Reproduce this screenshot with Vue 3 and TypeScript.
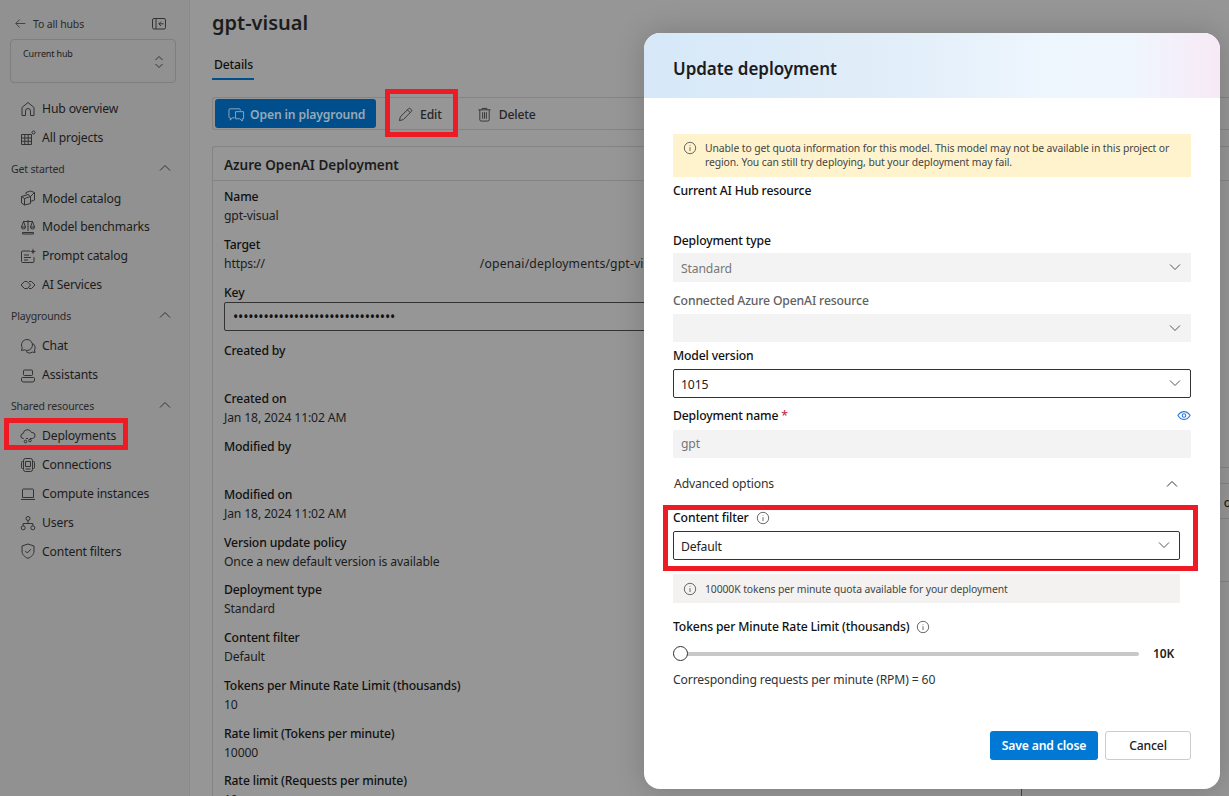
<script setup lang="ts">
const detailRows = [
  ['Name', 'gpt-visual'],
  ['Target', 'https://'],
]
const lowerRows = [
  ['Created by', '', false],
  ['Created on', 'Jan 18, 2024 11:02 AM', false],
  ['Modified by', '', false],
  ['Modified on', 'Jan 18, 2024 11:02 AM', false],
  ['Version update policy', 'Once a new default version is available', true],
  ['Deployment type', 'Standard', false],
  ['Content filter', 'Default', false],
  ['Tokens per Minute Rate Limit (thousands)', '10', false],
  ['Rate limit (Tokens per minute)', '10000', true],
  ['Rate limit (Requests per minute)', '10', false],
]
</script>

<template>
  <div class="page">
    <aside class="side">
      <div class="back">
        <svg class="ico" viewBox="0 0 16 16"><path d="M14 8H2.5M7 3 2.2 8 7 13" /></svg>
        <span>To all hubs</span>
        <svg class="collapse" viewBox="0 0 16 16"><rect x="1.5" y="2.5" width="13" height="10.5" rx="1.5" /><path d="M5 3v10M12.5 7.8H8M10 5.6 7.8 7.8 10 10" /></svg>
      </div>
      <div class="hub">
        <span>Current hub</span>
        <svg viewBox="0 0 12 18"><path d="M2.5 7 6 3.5 9.5 7M2.5 11 6 14.5 9.5 11" /></svg>
      </div>

      <nav class="nav nav-top">
        <a><svg class="ico" viewBox="0 0 16 16"><path d="M2 14.5V6.5L8 1.5l6 5v8h-3.5V10a2.5 2.5 0 0 0-5 0v4.500z" /></svg>Hub overview</a>
        <a><svg class="ico" viewBox="0 0 16 16"><path d="M1.500 4.500h10v10h-10zM1.500 8h10M1.500 11.300h10M4.800 4.500v10M8.200 4.500v10" /><circle cx="13.500" cy="2.500" r="1.500" /></svg>All projects</a>
      </nav>

      <div class="group">Get started<svg viewBox="0 0 12 8"><path d="M1 6.500 6 1.500l5 5" /></svg></div>
      <nav class="nav">
        <a class="tight"><svg class="ico" viewBox="0 0 16 16"><path d="M1.500 6.500 8 4.500l2.500 2v7l-6 1.500-3-2zM1.500 6.500l3 2v6.500M4.500 8.500l6-2M6 4V2.500L10.500 1l4 1.500v7.500l-4 1.500M10.500 6.500l4-4" /></svg>Model catalog</a>
        <a><svg class="ico" viewBox="0 0 16 16"><path d="M8 1v11M3 2.500h10M3.500 2.500 1.500 8h4zM12.500 2.500 10.500 8h4zM1.500 8a2 2 0 0 0 4 0M10.500 8a2 2 0 0 0 4 0M2.500 13.500h11v1.500h-11z" /></svg>Model benchmarks</a>
        <a><svg class="ico" viewBox="0 0 16 16"><path d="M10 3H2.500A1 1 0 0 0 1.500 4v9.500a1 1 0 0 0 1 1H13a1 1 0 0 0 1-1V9M4 7h5M4 9.500h7M4 12h4" /><path class="fill" d="M13 .5l.8 2.200 2.200.8-2.200.8L13 6.500l-.8-2.200-2.200-.8 2.200-.8z" /></svg>Prompt catalog</a>
        <a><svg class="ico" viewBox="0 0 16 16"><path d="M1 8 4.500 4.500h2.500L10.500 8 7.500 11.500H4.500zM15 8l-3.500-3.500H9M15 8l-3.500 3.500H9" /></svg>AI Services</a>
      </nav>

      <div class="group">Playgrounds<svg viewBox="0 0 12 8"><path d="M1 6.500 6 1.500l5 5" /></svg></div>
      <nav class="nav">
        <a><svg class="ico" viewBox="0 0 16 16"><path d="M7 1.500a5.500 5.500 0 0 0-4.800 8.200L1.500 12.500l3-.6A5.500 5.500 0 1 0 7 1.500zM12.500 5.500a4.500 4.500 0 0 1 2 6.500l.5 2.500-2.500-.4A5 5 0 0 1 6 13.500" /></svg>Chat</a>
        <a><svg class="ico" viewBox="0 0 16 16"><path d="M4.500 3h7A1 1 0 0 1 12.500 4v3.500a1 1 0 0 1-1 1h-7a1 1 0 0 1-1-1V4a1 1 0 0 1 1-1zM2.500 10.500h11a1 1 0 0 1 1 1V13a2 2 0 0 1-2 2h-9a2 2 0 0 1-2-2v-1.500a1 1 0 0 1 1-1zM6 5.500h.01M10 5.500h.01" /></svg>Assistants</a>
      </nav>

      <div class="group">Shared resources<svg viewBox="0 0 12 8"><path d="M1 6.500 6 1.500l5 5" /></svg></div>
      <nav class="nav">
        <a><svg class="ico" viewBox="0 0 16 16"><path d="M4 10.500H3.500a2.500 2.500 0 0 1-.3-5A4.300 4.300 0 0 1 11.500 4.500a3 3 0 0 1 1 6H10M6 10.500h2" /><circle cx="5.500" cy="13.500" r="1.300" /><circle cx="10" cy="12.500" r="1.300" /></svg>Deployments</a>
        <a><svg class="ico" viewBox="0 0 16 16"><rect x="3.500" y="1.500" width="9" height="13" rx="2" /><path d="M3.500 4.500H2.500A1 1 0 0 0 1.500 5.500v5a1 1 0 0 0 1 1h1M12.500 4.500h1a1 1 0 0 1 1 1v5a1 1 0 0 1-1 1h-1M5.500 4.500h5v5h-5zM5.500 12h5" /></svg>Connections</a>
        <a><svg class="ico" viewBox="0 0 16 16"><path d="M3.500 3h9a1 1 0 0 1 1 1v7.500h-11V4a1 1 0 0 1 1-1zM1 13.500h14" /></svg>Compute instances</a>
        <a><svg class="ico" viewBox="0 0 16 16"><circle cx="8" cy="3.500" r="2" /><circle cx="3.200" cy="12.800" r="2" /><circle cx="12.800" cy="12.800" r="2" /><path d="M8 5.500v3M3.200 10.800V8.500h9.600v2.300" /></svg>Users</a>
        <a class="tight"><svg class="ico" viewBox="0 0 16 16"><path d="M8 1 14 3v5c0 3.500-2.500 6-6 7.300C4.500 14 2 11.500 2 8V3zM5.300 8l2 2 3.500-3.700" /></svg>Content filters</a>
      </nav>
    </aside>

    <main class="main">
      <h1>gpt-visual</h1>
      <div class="tabs"><span class="tab">Details</span></div>
      <div class="toolbar">
        <button class="play">
          <svg viewBox="0 0 18 18"><path d="M2 3h10a1 1 0 0 1 1 1v1M7 12.500H4.500L2.500 15v-2.500H2a1 1 0 0 1-1-1V4a1 1 0 0 1 1-1M8 6h8.500v7.500h-1.500V16l-2.500-2.500H8z" /></svg>
          Open in playground
        </button>
        <button class="tool edit">
          <svg viewBox="0 0 16 16"><path d="M1.500 14.500l1-4L11 2a1.700 1.700 0 0 1 2.500 0l.5.500a1.700 1.700 0 0 1 0 2.500L5.500 13.500zM10 3l3 3" /></svg>
          Edit
        </button>
        <button class="tool del">
          <svg viewBox="0 0 16 16"><path d="M5.500 3V1.500h5V3M1.500 3h13M3 3v10.500A1.500 1.500 0 0 0 4.500 15h7a1.500 1.500 0 0 0 1.500-1.500V3M6 5.500v7M8 5.500v7M10 5.500v7" /></svg>
          Delete
        </button>
      </div>

      <section class="card">
        <h2>Azure OpenAI Deployment</h2>
        <div class="card-body">
          <div class="details">
            <div v-for="row in detailRows" :key="row[0]" class="pair">
              <div class="k">{{ row[0] }}</div>
              <div class="v target">
                {{ row[1] }}
                <span v-if="row[0] === 'Target'" class="path">/openai/deployments/gpt-visual</span>
              </div>
            </div>
            <div class="k">Key</div>
            <div class="key">••••••••••••••••••••••••••••••••</div>
            <div v-for="row in lowerRows" :key="String(row[0])" class="pair" :class="{ short: row[2] }">
              <div class="k">{{ row[0] }}</div>
              <div class="v">{{ row[1] }}</div>
            </div>
          </div>
          <div class="aside">
            <div class="aside-row r1"></div>
            <div class="aside-row r2"></div>
            <div class="aside-row r3">Location overview</div>
            <div class="aside-row r4"></div>
          </div>
        </div>
      </section>
    </main>

    <div class="modal">
      <header class="m-head">Update deployment</header>
      <div class="m-body">
        <div class="warn">
          <svg class="info" viewBox="0 0 16 16"><circle cx="8" cy="8" r="6.500" /><path d="M8 7v4.500M8 4.500v.8" /></svg>
          <p>Unable to get quota information for this model. This model may not be available in this project or region. You can still try deploying, but your deployment may fail.</p>
        </div>
        <label class="lbl hub-lbl">Current AI Hub resource</label>

        <label class="lbl type-lbl">Deployment type</label>
        <div class="sel off">
          <span>Standard</span>
          <svg viewBox="0 0 12 8"><path d="M1 1.500l5 5 5-5" /></svg>
        </div>

        <label class="lbl muted-lbl">Connected Azure OpenAI resource</label>
        <div class="sel off conn">
          <span></span>
          <svg viewBox="0 0 12 8"><path d="M1 1.500l5 5 5-5" /></svg>
        </div>

        <label class="lbl ver-lbl">Model version</label>
        <div class="sel on">
          <span>1015</span>
          <svg viewBox="0 0 12 8"><path d="M1 1.500l5 5 5-5" /></svg>
        </div>

        <div class="name-row">
          <label class="lbl">Deployment name <i>*</i></label>
          <svg class="eye" viewBox="0 0 16 12"><path d="M1 6c2-3 4.500-4.500 7-4.500S13 3 15 6c-2 3-4.500 4.500-7 4.500S3 9 1 6z" /><circle cx="8" cy="6" r="2" /></svg>
        </div>
        <div class="name-input">gpt</div>

        <div class="adv">
          <span>Advanced options</span>
          <svg viewBox="0 0 12 8"><path d="M1 6.500 6 1.500l5 5" /></svg>
        </div>

        <div class="narrow">
          <label class="lbl with-info">Content filter
            <svg class="info" viewBox="0 0 16 16"><circle cx="8" cy="8" r="6.500" /><path d="M8 7v4.500M8 4.500v.8" /></svg>
          </label>
          <div class="sel on">
            <span>Default</span>
            <svg viewBox="0 0 12 8"><path d="M1 1.500l5 5 5-5" /></svg>
          </div>
          <div class="quota">
            <svg class="info" viewBox="0 0 16 16"><circle cx="8" cy="8" r="6.500" /><path d="M8 7v4.500M8 4.500v.8" /></svg>
            10000K tokens per minute quota available for your deployment
          </div>
        </div>

        <label class="lbl with-info tpm-lbl">Tokens per Minute Rate Limit (thousands)
          <svg class="info" viewBox="0 0 16 16"><circle cx="8" cy="8" r="6.500" /><path d="M8 7v4.500M8 4.500v.8" /></svg>
        </label>
        <div class="slider">
          <div class="track"><span class="thumb"></span></div>
          <b>10K</b>
        </div>
        <p class="rpm">Corresponding requests per minute (RPM) = 60</p>

        <div class="actions">
          <button class="save">Save and close</button>
          <button class="cancel">Cancel</button>
        </div>
      </div>
    </div>

    <div class="mark mark-nav"></div>
    <div class="mark mark-edit"></div>
    <div class="mark mark-filter"></div>
  </div>
</template>

<style>
html, body { margin: 0; overflow: hidden; }
</style>

<style scoped>
.page { position: relative; display: flex; width: 1229px; height: 796px; overflow: hidden; background: #969696; color: #111; font-family: "Noto Sans", "Open Sans", Arial, sans-serif; font-size: 12.2px; letter-spacing: -.15px; }
svg { fill: none; stroke: currentColor; stroke-width: 1; flex: none; }
button { font: inherit; letter-spacing: inherit; cursor: pointer; }

.side { flex: none; box-sizing: border-box; width: 190px; padding: 0 13px 0 10px; background: #919191; border-right: 1px solid #8a8a8a; color: #1c1c1c; }
.ico { width: 16px; height: 16px; color: #333; }
.back { display: flex; align-items: center; gap: 6px; box-sizing: border-box; height: 39px; padding: 9px 0 1px 4px; font-size: 10.5px; color: #2a2a2a; }
.back .ico { width: 13px; height: 13px; }
.collapse { width: 16px; height: 16px; margin-left: auto; margin-right: 9px; color: #333; }
.hub { display: flex; justify-content: space-between; box-sizing: border-box; width: 166px; height: 44px; padding: 7px 10px 0 12px; border: 1px solid #7e7e7e; border-radius: 4px; font-size: 9px; color: #1c1c1c; }
.hub svg { width: 12px; height: 18px; margin-top: 6px; color: #333; }
.nav { display: flex; flex-direction: column; }
.nav a { display: flex; align-items: center; gap: 6px; height: 29px; padding-left: 10px; white-space: nowrap; }
.nav a.tight { height: 28px; }
.nav-top { margin-top: 11px; }
.group { display: flex; align-items: center; justify-content: space-between; box-sizing: border-box; height: 32px; padding: 2px 0 0 1px; font-size: 10.5px; color: #2a2a2a; }
.group svg { width: 12px; height: 8px; margin-right: 5px; color: #333; margin-top: -2px; }
.fill { fill: currentColor; stroke: none; }

.main { flex: 1; min-width: 0; padding-left: 22px; }
h1 { margin: 10px 0 0; font-size: 20px; line-height: 26px; font-weight: 600; letter-spacing: 0; color: #1c1c1c; }
.tabs { margin-top: 19px; height: 25px; }
.tab { display: inline-block; box-sizing: border-box; height: 25px; padding: 0 1px 0 2px; border-bottom: 2px solid #004f8c; font-weight: 500; line-height: 20px; }
.toolbar { display: flex; align-items: center; box-sizing: border-box; width: 1100px; height: 33px; margin-top: 17px; padding-left: 2px; border: 1px solid #848484; border-right: 0; border-radius: 3px 0 0 3px; }
.play { display: flex; align-items: center; gap: 5px; width: 161px; height: 29px; padding: 1px 0 0 13px; border: 0; border-radius: 3px; background: #004f8c; color: #97a9b7; font-weight: 600; }
.play svg { width: 17px; height: 17px; color: #97a9b7; }
.tool { display: flex; align-items: center; gap: 7px; height: 29px; padding: 1px 0 0; border: 0; background: none; color: #262626; font-weight: 500; }
.tool svg { width: 15px; height: 15px; color: #333; }
.edit { margin-left: 22px; }
.del { margin-left: 35px; }

.card { width: 1100px; margin-top: 16px; border: 1px solid #848484; border-right: 0; border-bottom: 0; border-radius: 3px 0 0 0; }
h2 { margin: 0; height: 34px; box-sizing: border-box; padding: 9px 11px 0; border-bottom: 1px solid #848484; font-size: 13.5px; line-height: 19px; font-weight: 600; letter-spacing: 0; color: #1c1c1c; }
.card-body { display: flex; }
.details { box-sizing: border-box; width: 808px; flex: none; padding: 6px 11px 0; }
.pair { height: 38px; margin-bottom: 10px; }
.pair.short { margin-bottom: 9px; }
.k { line-height: 19px; font-weight: 500; white-space: nowrap; }
.v { line-height: 19px; color: #1c1c1c; white-space: nowrap; }
.target { display: flex; }
.path { margin-left: 215px; letter-spacing: .15px; }
.pair:first-child .path { display: none; }
.key { display: flex; align-items: center; box-sizing: border-box; width: 570px; height: 29px; margin: 0 0 10px; padding-left: 8px; border: 1px solid #333; border-radius: 2px; font-size: 14px; letter-spacing: -.2px; color: #111; }
.aside { flex: 1; border-left: 1px solid #444; }
.aside-row { box-sizing: border-box; border-bottom: 1px solid #848484; white-space: nowrap; }
.r1 { height: 287px; }
.r2 { height: 16px; }
.r3 { height: 35px; padding: 9px 0 0 151px; line-height: 19px; color: #111; }
.r4 { height: 63px; }

.modal { position: absolute; left: 644px; top: 33px; display: flex; flex-direction: column; width: 576px; height: 756px; overflow: hidden; border-radius: 16px; background: #fff; box-shadow: 0 0 30px rgba(0, 0, 0, .18); }
.m-head { flex: none; box-sizing: border-box; height: 65px; padding: 22px 29px 0; background: linear-gradient(90deg, #d6e8f8 0%, #e2eef9 45%, #eef6fe 70%, #f0f6fd 85%, #f7e9f6 100%); font-size: 17px; line-height: 28px; font-weight: 600; letter-spacing: -.05px; color: #1c1c1c; }
.m-body { flex: 1; padding: 36px 29px 0; }
.warn { display: flex; gap: 8px; box-sizing: border-box; height: 43px; padding: 7px 10px 0; background: #fff3cd; }
.warn p { margin: 0; font-size: 10.4px; line-height: 14px; letter-spacing: -.1px; color: #444; }
.info { width: 14px; height: 14px; color: #555; }
.lbl { display: block; font-weight: 500; line-height: 19px; color: #111; }
.hub-lbl { margin-top: 4px; }
.type-lbl { margin-top: 31px; }
.muted-lbl { margin-top: 9px; color: #616161; }
.ver-lbl { margin-top: 4px; }
.sel { display: flex; align-items: center; justify-content: space-between; box-sizing: border-box; height: 29px; padding: 1px 8px 0; color: #222; }
.sel svg { width: 12px; height: 8px; margin-right: 2px; margin-top: -2px; color: #555; }
.off { background: #f3f3f3; color: #777; }
.on { padding: 1px 7px 0; border: 1px solid #333; border-radius: 2px; }
.lbl + .sel { margin-top: 4px; }
.type-lbl + .sel { margin-top: 3px; }
.lbl + .sel.conn { height: 28px; }
.name-row { display: flex; align-items: center; justify-content: space-between; margin-top: 8px; }
.lbl i { font-style: normal; color: #c4314b; }
.eye { width: 14px; height: 11px; color: #2f7ad9; stroke-width: 1.300; }
.name-input { box-sizing: border-box; height: 28px; margin-top: 5px; padding: 0 8px; border-radius: 2px; background: #f3f3f3; color: #777; line-height: 28px; }
.adv { display: flex; align-items: center; justify-content: space-between; height: 25px; margin-top: 13px; padding: 0 13px 0 1px; color: #333; }
.adv svg { width: 12px; height: 8px; color: #333; }
.narrow { width: 507px; margin-top: 12px; }
.with-info { display: flex; align-items: center; gap: 7px; }
.quota { display: flex; align-items: center; gap: 8px; box-sizing: border-box; height: 29px; margin-top: 14px; padding-left: 10px; background: #f3f2f1; font-size: 10.4px; letter-spacing: -.1px; color: #444; }
.tpm-lbl { margin-top: 14px; }
.slider { display: flex; align-items: center; height: 19px; margin-top: 8px; }
.track { position: relative; width: 466px; height: 4px; border-radius: 2px; background: #c8c8c8; }
.thumb { position: absolute; left: 0; top: -5.500px; box-sizing: border-box; width: 15px; height: 15px; border: 1px solid #333; border-radius: 50%; background: #fff; }
.slider b { margin-left: 14px; font-size: 12px; font-weight: 600; color: #222; }
.rpm { margin: 7px 0 0; line-height: 19px; color: #333; }
.actions { display: flex; justify-content: flex-end; gap: 7px; margin-top: 42px; }
.save { width: 108px; height: 29px; border: 0; border-radius: 3px; background: #0078d4; color: #fff; font-weight: 600; }
.cancel { width: 86px; height: 29px; border: 1px solid #ccc; border-radius: 3px; background: #fff; color: #222; font-weight: 500; }

.mark { position: absolute; box-sizing: border-box; border: 5px solid #ed1c24; pointer-events: none; }
.mark-nav { left: 4px; top: 418px; width: 124px; height: 32px; }
.mark-edit { left: 385px; top: 89px; width: 73px; height: 48px; }
.mark-filter { left: 663px; top: 505px; width: 535px; height: 66px; }
</style>
